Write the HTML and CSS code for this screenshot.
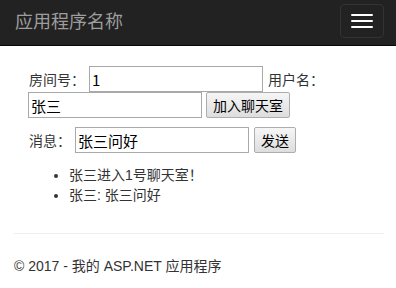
FILE: index.html
```html
<!DOCTYPE html>
<html>
<head>
<meta charset="utf-8">
<link rel="stylesheet" href="styles.css">
</head>
<body>
<header class="navbar">
  <span class="brand">应用程序名称</span>
  <button class="toggle" type="button" aria-label="menu">
    <span class="bar"></span><span class="bar"></span><span class="bar"></span>
  </button>
</header>
<main class="container">
  <div class="chat">
    <div class="row row-join">
      <label class="lbl">房间号：</label>
      <input class="field" type="text" value="1">
      <label class="lbl">用户名：</label>
      <input class="field field-name" type="text" value="张三">
      <button class="btn" type="button">加入聊天室</button>
    </div>
    <div class="row row-msg">
      <label class="lbl">消息：</label>
      <input class="field" type="text" value="张三问好">
      <button class="btn" type="button">发送</button>
    </div>
    <ul class="messages">
      <li>张三进入1号聊天室！</li>
      <li>张三: 张三问好</li>
    </ul>
  </div>
  <hr class="rule">
  <footer class="footer">© 2017 - 我的 ASP.NET 应用程序</footer>
</main>
</body>
</html>
```
FILE: styles.css
```css
html, body {
  margin: 0;
  padding: 0;
}
body {
  font-family: "Liberation Sans", "Noto Sans CJK SC", sans-serif;
  font-size: 14px;
  color: #333;
  background: #fff;
}
.navbar {
  height: 45px;
  background: #222;
  border-bottom: 1px solid #080808;
  display: flex;
  align-items: flex-start;
  justify-content: space-between;
  padding: 0 12px 0 15px;
}
.brand {
  font-family: "Noto Sans CJK SC", sans-serif;
  font-size: 18px;
  line-height: 40px;
  color: #9d9d9d;
}
.toggle {
  margin-top: 4px;
  width: 44px;
  height: 34px;
  box-sizing: border-box;
  background: transparent;
  border: 1px solid #333;
  border-radius: 4px;
  display: flex;
  flex-direction: column;
  align-items: center;
  justify-content: center;
  gap: 4px;
  padding: 0;
}
.bar {
  display: block;
  width: 22px;
  height: 2px;
  background: #fff;
  border-radius: 1px;
}
.container {
  padding: 0 12px 0 14px;
}
.chat {
  padding: 20px 0 0 15px;
}
.row {
  display: flex;
  flex-wrap: wrap;
  align-items: center;
  line-height: 20px;
}
.row-join {
  width: 340px;
}
.row-msg {
  margin-top: 9px;
}
.lbl {
  font-family: "Noto Sans CJK SC", sans-serif;
  font-size: 14px;
  color: #333;
  margin-right: 4px;
}
.field {
  box-sizing: border-box;
  width: 174px;
  height: 26px;
  border: 1px solid #a9a9a9;
  padding: 0 2px;
  font-family: "Noto Sans CJK SC", "Liberation Sans", sans-serif;
  font-size: 15px;
  color: #000;
  margin-right: 5px;
  outline: none;
}
.field-name {
  margin-left: -1px;
  margin-right: 4px;
}
.btn {
  box-sizing: border-box;
  height: 26px;
  padding: 0 6px;
  border: 1px solid #adadad;
  border-radius: 2px;
  background: linear-gradient(#f6f6f6, #dddddd);
  font-family: "Noto Sans CJK SC", sans-serif;
  font-size: 14px;
  line-height: 20px;
  color: #000;
}
.messages {
  margin: 12px 0 0;
  padding-left: 40px;
  line-height: 20px;
  font-family: "Liberation Sans", "Noto Sans CJK SC", sans-serif;
}
.rule {
  margin: 28px 0 0;
  border: 0;
  border-top: 1px solid #eee;
}
.footer {
  padding-top: 22px;
  line-height: 20px;
}
```
